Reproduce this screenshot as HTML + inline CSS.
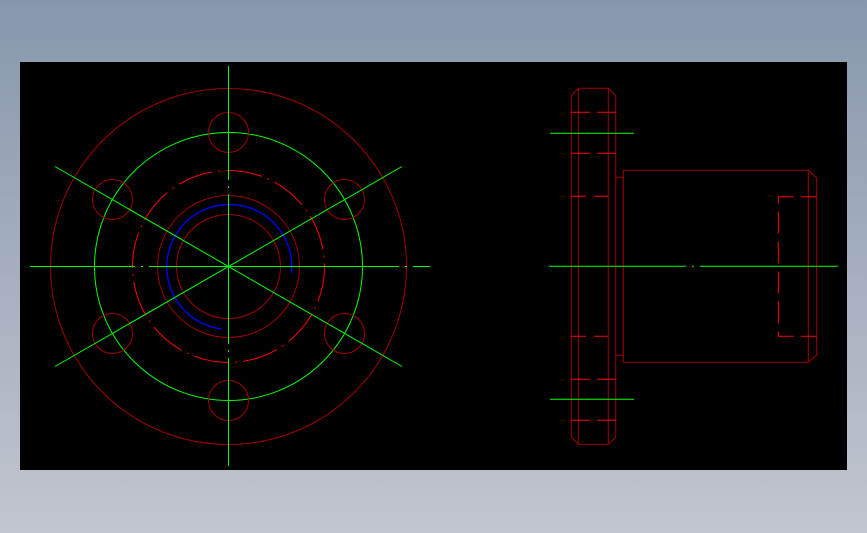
<!DOCTYPE html>
<html><head><style>
html,body{margin:0;padding:0;width:867px;height:533px;overflow:hidden;background:linear-gradient(#8797ad,#c2c6cf);}
svg{position:absolute;left:0;top:0}
</style></head><body>
<svg width="867" height="533" viewBox="0 0 867 533">
<rect x="20" y="62" width="827" height="408" fill="#000"/>
<g fill="none" stroke-width="1">
<circle cx="228.5" cy="266.5" r="178" stroke="#a00000"/>
<circle cx="228.5" cy="266.5" r="134" stroke="#00ff00"/>
<circle cx="228.5" cy="266.5" r="96" stroke="#ff0000" stroke-dasharray="36,6,2,6"/>
<circle cx="228.5" cy="266.5" r="71" stroke="#a00000"/>
<circle cx="228.5" cy="266.5" r="52" stroke="#a00000"/>
<path d="M291.5 273 A62.5 62.5 0 1 0 222 329" stroke="#0000ff" stroke-width="1.3"/>
<g stroke="#a00000">
<circle cx="228.5" cy="132.5" r="20"/><circle cx="344.5" cy="199.5" r="20"/><circle cx="344.5" cy="333.5" r="20"/>
<circle cx="228.5" cy="400.5" r="20"/><circle cx="112.5" cy="333.5" r="20"/><circle cx="112.5" cy="199.5" r="20"/>
</g>
<g stroke="#00ff00">
<line x1="30" y1="266.5" x2="430" y2="266.5" stroke-dasharray="105,6,2,6,250,6,2,6,200"/>
<line x1="228.5" y1="66" x2="228.5" y2="466" stroke-dasharray="114,6,2,6,150,6,2,6,200"/>
<line x1="55" y1="166.5" x2="402" y2="366.5"/>
<line x1="55" y1="366.5" x2="402" y2="166.5"/>
</g>
<g stroke="#a00000">
<path d="M578.3 88.3 H608.3 L615.7 95.5 V437 L608.3 444.3 H578.3 L571.3 437 V95.5 Z"/>
<line x1="578.3" y1="88.3" x2="578.3" y2="444.3"/>
<line x1="608.3" y1="88.3" x2="608.3" y2="444.3"/>
<path d="M615.7 177.3 H623.3 M615.7 355.3 H623.3"/>
<path d="M808.3 170.3 H623.3 V362.3 H808.3 L816.7 355.3 V177.7 Z"/>
<line x1="808.3" y1="170.3" x2="808.3" y2="362.3"/>
</g>
<g stroke="#ff0000">
<path d="M571.3 112.3 H590 M597 112.3 H615.7 M571.3 153.3 H590 M597 153.3 H615.7 M571.3 196.3 H586 M594 196.3 H608.3 M571.3 336.3 H586 M594 336.3 H608.3 M571.3 379.3 H590 M597 379.3 H615.7 M571.3 420.3 H590 M597 420.3 H615.7"/>
<path d="M793.5 196.7 H778.3 V336.3 H793.5 M801 196.7 H816.7 M801 336.3 H816.7" stroke-dasharray="22,8"/>
</g>
<g stroke="#00ff00">
<line x1="550" y1="133.3" x2="634" y2="133.3"/>
<line x1="550" y1="399.3" x2="634" y2="399.3"/>
<line x1="549" y1="266.3" x2="838" y2="266.3" stroke-dasharray="137,6,2,6,200"/>
</g>
</g>
</svg>
</body></html>
